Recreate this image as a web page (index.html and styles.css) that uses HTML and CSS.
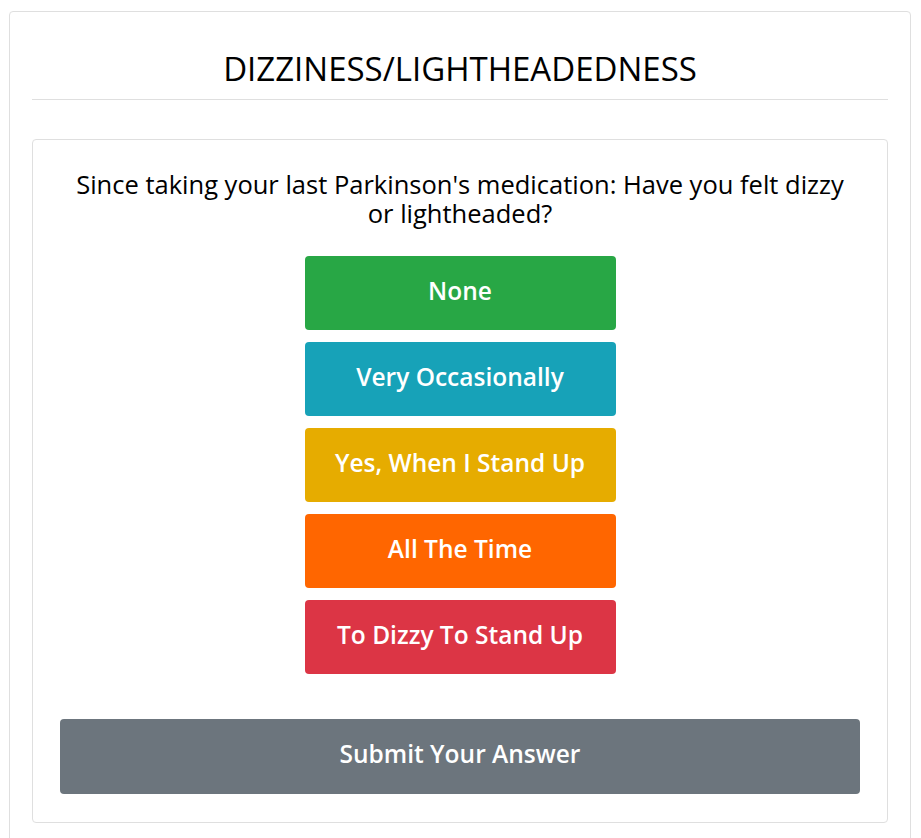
FILE: index.html
```html
<!DOCTYPE html>
<html lang="en">
<head>
<meta charset="utf-8">
<title>Dizziness/Lightheadedness</title>
<link rel="stylesheet" href="styles.css">
</head>
<body>
<div class="page">
  <section class="card">
    <h2 class="title">DIZZINESS/LIGHTHEADEDNESS</h2>
    <hr class="rule">
    <div class="question-card">
      <h4 class="question">Since taking your last Parkinson's medication: Have you felt dizzy or lightheaded?</h4>
      <div class="options">
        <button class="opt opt-green">None</button>
        <button class="opt opt-teal">Very Occasionally</button>
        <button class="opt opt-yellow">Yes, When I Stand Up</button>
        <button class="opt opt-orange">All The Time</button>
        <button class="opt opt-red">To Dizzy To Stand Up</button>
      </div>
      <button class="submit">Submit Your Answer</button>
    </div>
  </section>
</div>
</body>
</html>
```
FILE: styles.css
```css
* { box-sizing: border-box; }
html, body { margin: 0; background: #fff; }
body {
  font-family: "Open Sans", "Noto Sans", sans-serif;
  color: #000;
}
.page {
  padding: 11px 10px 0 9px;
}
.card {
  border: 1px solid #dfdfdf;
  border-radius: 4px;
  padding: 0 22px 40px;
}
.title {
  margin: 38px 0 0;
  font-size: 33px;
  font-weight: 500;
  line-height: 38px;
  text-align: center;
}
.rule {
  margin: 11px 0 0;
  border: 0;
  border-top: 1px solid #dfdfdf;
}
.question-card {
  margin-top: 39px;
  border: 1px solid #dfdfdf;
  border-radius: 4px;
  padding: 30px 27px 28px;
}
.question {
  margin: 0 auto;
  max-width: 780px;
  font-size: 25.5px;
  font-weight: 500;
  line-height: 29px;
  text-align: center;
}
.options {
  display: flex;
  flex-direction: column;
  align-items: center;
  gap: 12px;
  margin-top: 28px;
}
.opt, .submit {
  border: 0;
  border-radius: 4px;
  color: #fff;
  font-family: inherit;
  font-size: 24.5px;
  font-weight: 600;
  padding: 0 0 6px;
  cursor: pointer;
}
.opt {
  width: 311px;
  height: 74px;
}
.opt-green { background: #28a745; }
.opt-teal { background: #17a2b8; }
.opt-yellow { background: #e6ac00; }
.opt-orange { background: #ff6600; }
.opt-red { background: #dc3545; }
.submit {
  display: block;
  width: 100%;
  height: 75px;
  margin-top: 45px;
  background: #6c757d;
}
```
